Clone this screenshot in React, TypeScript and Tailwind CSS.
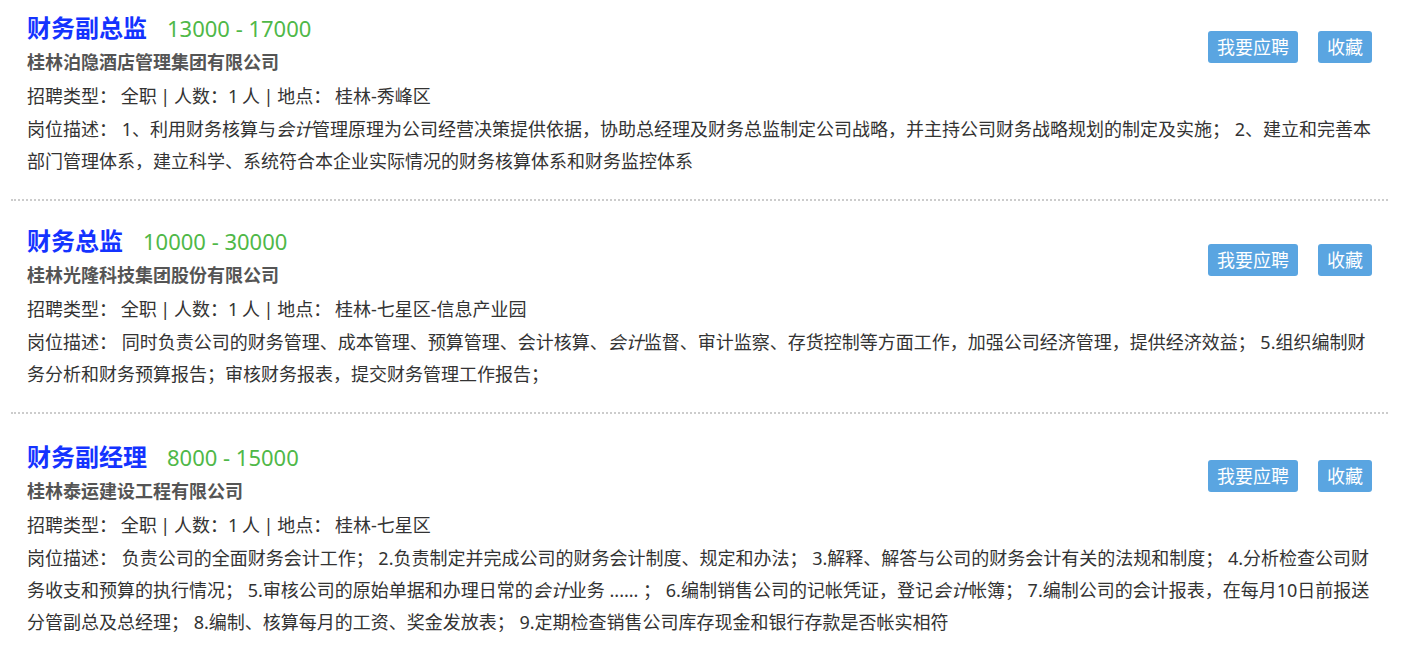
import React from "react";

type Seg = { t: string; i?: boolean };
type Job = {
  title: string;
  salary: string;
  company: string;
  place: string;
  desc: Seg[];
};

const jobs: Job[] = [
  {
    title: "财务副总监",
    salary: "13000 - 17000",
    company: "桂林泊隐酒店管理集团有限公司",
    place: "桂林-秀峰区",
    desc: [
      { t: "1、利用财务核算与" },
      { t: "会计", i: true },
      {
        t: "管理原理为公司经营决策提供依据，协助总经理及财务总监制定公司战略，并主持公司财务战略规划的制定及实施； 2、建立和完善本部门管理体系，建立科学、系统符合本企业实际情况的财务核算体系和财务监控体系",
      },
    ],
  },
  {
    title: "财务总监",
    salary: "10000 - 30000",
    company: "桂林光隆科技集团股份有限公司",
    place: "桂林-七星区-信息产业园",
    desc: [
      { t: "同时负责公司的财务管理、成本管理、预算管理、会计核算、" },
      { t: "会计", i: true },
      {
        t: "监督、审计监察、存货控制等方面工作，加强公司经济管理，提供经济效益； 5.组织编制财务分析和财务预算报告；审核财务报表，提交财务管理工作报告；",
      },
    ],
  },
  {
    title: "财务副经理",
    salary: "8000 - 15000",
    company: "桂林泰运建设工程有限公司",
    place: "桂林-七星区",
    desc: [
      {
        t: "负责公司的全面财务会计工作； 2.负责制定并完成公司的财务会计制度、规定和办法； 3.解释、解答与公司的财务会计有关的法规和制度； 4.分析检查公司财务收支和预算的执行情况； 5.审核公司的原始单据和办理日常的",
      },
      { t: "会计", i: true },
      { t: "业务 ...... ； 6.编制销售公司的记帐凭证，登记" },
      { t: "会计", i: true },
      {
        t: "帐簿； 7.编制公司的会计报表，在每月10日前报送分管副总及总经理； 8.编制、核算每月的工资、奖金发放表； 9.定期检查销售公司库存现金和银行存款是否帐实相符",
      },
    ],
  },
];

const itemClasses = [
  "px-4 pt-[11px] pb-[22px]",
  "px-4 pt-[23px] pb-[22px] border-t-2 border-dotted border-[#cccccc]",
  "px-4 pt-[26px] pb-[22px] border-t-2 border-dotted border-[#cccccc]",
];

export default function App() {
  return (
    <div
      className="w-[1402px] h-[650px] bg-white overflow-hidden"
      style={{ fontFamily: '"Noto Sans", "Noto Sans CJK SC", sans-serif' }}
    >
      <div className="ml-[11px] w-[1377px]">
        {jobs.map((job, idx) => (
          <div key={idx} className={itemClasses[idx]}>
            <div className="flex justify-between items-start">
              <div>
                <div className="flex items-center h-[34px]">
                  <span className="text-[24px] font-bold text-[#1433ff] leading-[34px]">
                    {job.title}
                  </span>
                  <span className="ml-[20px] text-[22px] text-[#4fb848] leading-[34px]">
                    {job.salary}
                  </span>
                </div>
                <div className="h-[34px] leading-[34px] text-[18px] font-bold text-[#555555]">
                  {job.company}
                </div>
              </div>
              <div className="flex gap-[20px] mt-[20px]">
                <button className="h-[32px] px-[9px] rounded-[3px] bg-[#5aa5e1] text-white text-[18px] leading-[32px]">
                  我要应聘
                </button>
                <button className="h-[32px] px-[9px] rounded-[3px] bg-[#5aa5e1] text-white text-[18px] leading-[32px]">
                  收藏
                </button>
              </div>
            </div>
            <div className="h-[34px] leading-[34px] text-[18px] text-[#333333] [word-spacing:-1px]">
              招聘类型： 全职 | 人数：1 人 | 地点： {job.place}
            </div>
            <div className="text-[18px] leading-[32px] text-[#333333]">
              岗位描述： {job.desc.map((s, k) =>
                s.i ? (
                  <em key={k} className="italic">
                    {s.t}
                  </em>
                ) : (
                  <span key={k}>{s.t}</span>
                )
              )}
            </div>
          </div>
        ))}
      </div>
    </div>
  );
}
